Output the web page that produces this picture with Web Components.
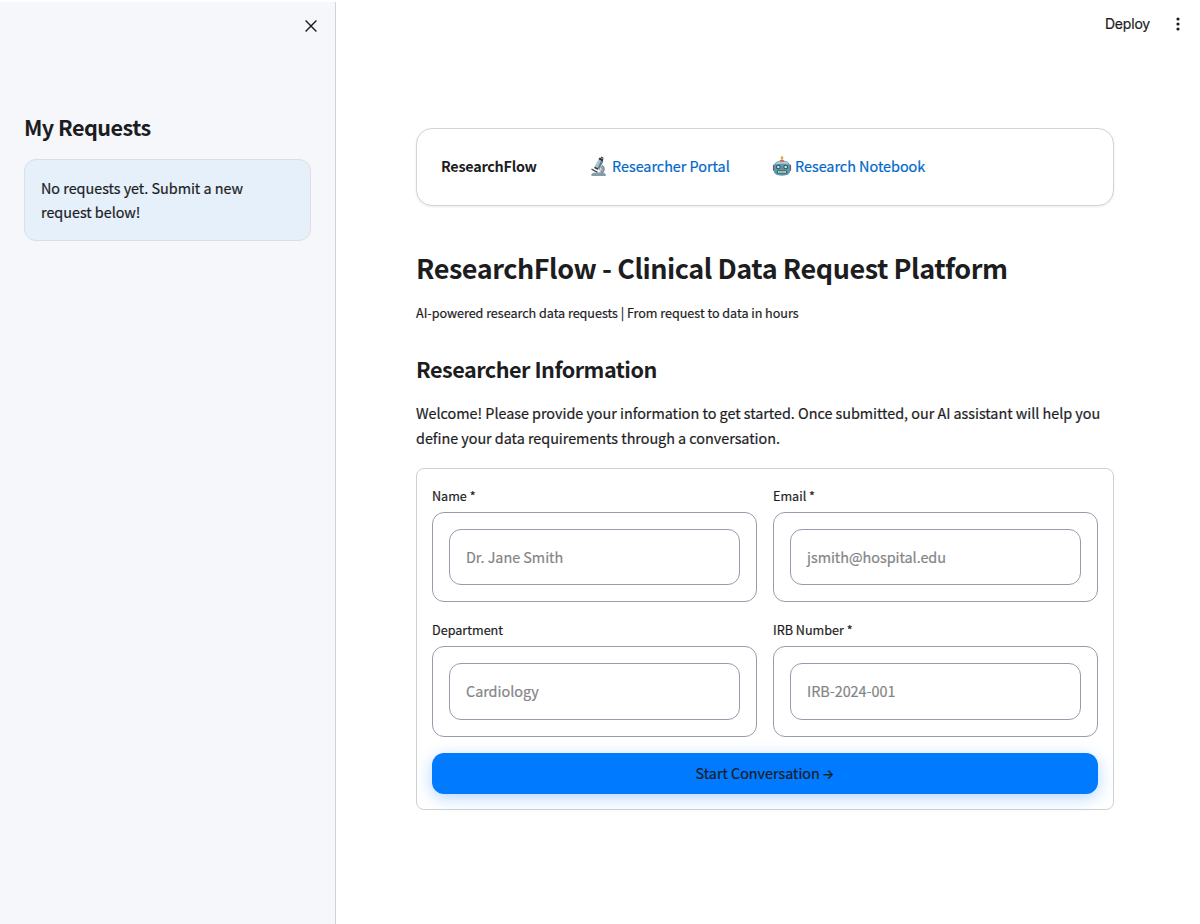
<!DOCTYPE html>
<html lang="en">
<head>
<meta charset="utf-8">
<title>ResearchFlow</title>
<style>
  html, body { margin: 0; height: 100%; background: #fff; }
  body { font-family: "Noto Sans CJK SC", "Noto Sans", sans-serif; font-size: 14.4px; color: #1d1d1f; overflow: hidden; -webkit-text-stroke-width: .2px; }
</style>
</head>
<body>
<rf-app>
  <rf-sidebar slot="sidebar" heading="My Requests">
    <rf-notice><rf-text size="14.4" line="24" track="-.03">No requests yet. Submit a new<br>request below!</rf-text></rf-notice>
  </rf-sidebar>
  <rf-toolbar slot="toolbar">Deploy</rf-toolbar>
  <rf-nav>
    <rf-text slot="brand" size="14.4" line="24" track="-.27" bold>ResearchFlow</rf-text>
    <rf-link icon="microscope">Researcher Portal</rf-link>
    <rf-link icon="robot">Research Notebook</rf-link>
  </rf-nav>
  <rf-text class="title" size="27" line="38" track="-.45" bold style="margin-top:43px">ResearchFlow - Clinical Data Request Platform</rf-text>
  <rf-text class="caption" size="12.6" line="22" track="-.03" style="margin-top:15px">AI-powered research data requests | From request to data in hours</rf-text>
  <rf-text class="section" size="21.6" line="30" track="-.5" bold style="margin-top:30px">Researcher Information</rf-text>
  <rf-text class="intro" size="14.4" line="25" track="-.03" style="margin-top:16px">Welcome! Please provide your information to get started. Once submitted, our AI assistant will help you<br>define your data requirements through a conversation.</rf-text>
  <rf-form>
    <rf-field label="Name *" placeholder="Dr. Jane Smith"></rf-field>
    <rf-field label="Email *" placeholder="jsmith@hospital.edu"></rf-field>
    <rf-field label="Department" placeholder="Cardiology" style="--inner:57px"></rf-field>
    <rf-field label="IRB Number *" placeholder="IRB-2024-001" style="--inner:57px"></rf-field>
    <rf-button slot="action">Start Conversation <span style="font:500 13px Inter,sans-serif;margin-left:-1px">→</span></rf-button>
  </rf-form>
</rf-app>
<script>
class Base extends HTMLElement {
  constructor() { super(); this.attachShadow({ mode: 'open' }); }
  connectedCallback() { this.shadowRoot.innerHTML = this.render(); }
  attr(n) { return this.getAttribute(n) || ''; }
}
const define = (name, render) => customElements.define(name, class extends Base { render() { return render(this); } });

const ICONS = {
  microscope: `<svg width="20" height="20" viewBox="0 0 20 20">
    <path d="M2.5 17.3 4 15.8h11.2l1.5 1.5v1H2.5z" fill="#8ba5b3"/><path d="M2.5 17.8h14.2v.8H2.5z" fill="#4f6c7d"/>
    <path d="M11.5 8.2c4.6 1.4 4.3 6.2 1 7.8H7.6c4-.7 5.6-3 3.9-5.5z" fill="#9db2bd"/>
    <path d="M13 8.6c3.4 2 2.7 6-.6 7.5" fill="none" stroke="#68808e" stroke-width="1.2"/>
    <path d="m9.6 2.2 4.6 2.5-3.9 7.1-4.6-2.5z" fill="#a8c4d3"/><path d="m12.2 3.6 2 1.1-3.9 7.1-1.7-.9z" fill="#647b8b"/>
    <path d="m10.6.5 3.9 2.1-.9 1.8-4.1-2.2z" fill="#2c3033"/><path d="m12.2-.6 2.5 1.3-.7 1.3-2.5-1.4z" fill="#45494c"/>
    <path d="m5.8 9.4 3.8 2.1-.8 1.6-3.7-2z" fill="#35393c"/><path d="m2.8 11.6 5.9 3.2-.5 1.1-5.9-3.1z" fill="#42484b"/>
    <circle cx="11.7" cy="12.1" r="1.4" fill="#e1eaf0" stroke="#72818a" stroke-width=".6"/>
  </svg>`,
  robot: `<svg width="20" height="20" viewBox="0 0 20 20">
    <path d="M10 1v4" stroke="#778b94" stroke-width="1"/><circle cx="10" cy=".7" r="1.4" fill="#f0a332"/>
    <rect x=".9" y="7.6" width="3" height="6.6" rx="1.4" fill="#6b5864"/><rect x="16.1" y="7.6" width="3" height="6.6" rx="1.4" fill="#6b5864"/>
    <path d="M2 9.4C2 5.6 5.2 3.4 10 3.4s8 2.2 8 6v4.9c0 2.8-2.7 4.4-8 4.4s-8-1.6-8-4.4z" fill="#5b98a8"/>
    <path d="M3 7.5C4.2 5.1 7 4 10 4s5.8 1.1 7 3.5c-4.2-1-9.8-1-14 0z" fill="#a9cbd2"/>
    <path d="M8.3 3h3.4l.6 1.8H7.7z" fill="#dd615b"/>
    <circle cx="6.3" cy="10" r="2.3" fill="#2d505e"/><circle cx="13.7" cy="10" r="2.3" fill="#2d505e"/>
    <circle cx="6.3" cy="10" r="1.3" fill="#a4f4f4"/><circle cx="13.7" cy="10" r="1.3" fill="#a4f4f4"/>
    <path d="m10 10.6 1.1 1.8H8.9z" fill="#e25b50"/><rect x="5" y="13.4" width="10" height="3.2" rx="1.4" fill="#37545f"/>
    <path d="M6 14.2h8v1.6H6z" fill="#d9eff0"/><path d="M8 14v2m2-2v2m2-2v2" stroke="#4a6b75" stroke-width=".5"/>
  </svg>`
};

define('rf-text', el => `<style>
  :host { display: block; font-size: ${el.attr('size')}px; line-height: ${el.attr('line')}px; font-weight: ${el.hasAttribute('bold') ? 600 : 400}; white-space: nowrap; letter-spacing: ${el.attr('track') || 0}px; ${el.hasAttribute('bold') ? '-webkit-text-stroke-width: 0;' : ''} }
</style><slot></slot>`);

define('rf-app', () => `<style>
  :host { display: grid; grid-template-columns: 336px 1fr; height: 100vh; }
  .page { display: flex; flex-direction: column; }
  main { padding: 80px 86px 0 80px; }
</style><slot name="sidebar"></slot><div class="page"><slot name="toolbar"></slot><main><slot></slot></main></div>`);

define('rf-sidebar', el => `<style>
  :host { display: block; box-sizing: border-box; margin-top: 2px; padding: 0 24px; background: #f5f7fb; border-right: 1px solid #d0d2d8; }
  header { height: 48px; display: flex; justify-content: flex-end; align-items: center; margin-right: -7px; }
  header svg { display: block; }
  h2 { margin: 61px 0 16px; font-size: 21.6px; line-height: 32px; font-weight: 600; letter-spacing: -.55px; white-space: nowrap; -webkit-text-stroke-width: 0; }
</style><header><svg width="14" height="14" viewBox="0 0 14 14" fill="none" stroke="#1d1d1f" stroke-width="1.4"><path d="m1.6 1.6 10.8 10.8M12.4 1.6 1.6 12.4"/></svg></header>
<h2>${el.attr('heading')}</h2><slot></slot>`);

define('rf-notice', () => `<style>
  :host { display: block; box-sizing: border-box; height: 82px; padding: 16px; border: 1px solid #dbdfe3; border-radius: 12px; background: #e6f0fb; }
</style><slot></slot>`);

define('rf-toolbar', () => `<style>
  :host { display: flex; height: 48px; box-sizing: border-box; padding-right: 20px; justify-content: flex-end; align-items: center; gap: 26px; font: 400 14px Inter, sans-serif; letter-spacing: -.2px; }
  svg { display: block; }
  span { padding-bottom: 2px; }
</style><span><slot></slot></span><svg width="4" height="14" viewBox="0 0 4 14" fill="#1d1d1f"><circle cx="2" cy="2" r="1.6"/><circle cx="2" cy="7" r="1.6"/><circle cx="2" cy="12" r="1.6"/></svg>`);

define('rf-nav', () => `<style>
  :host { display: grid; grid-template-columns: 148px 183px 1fr; align-items: center; box-sizing: border-box; height: 78px; padding: 0 24px 2px; border: 1px solid #d1d3dd; border-radius: 16px; box-shadow: 0 1px 3px rgba(0,0,0,.08); background: #fff; }
</style><slot name="brand"></slot><slot></slot>`);

define('rf-link', el => `<style>
  :host { display: flex; align-items: center; gap: 3px; font-size: 14.4px; line-height: 24px; letter-spacing: -.02px; color: #0068c9; white-space: nowrap; }
  svg { display: block; overflow: visible; margin-top: 2px; }
</style>${ICONS[el.attr('icon')]}<span><slot></slot></span>`);

define('rf-form', () => `<style>
  :host { display: block; box-sizing: border-box; height: 342px; margin-top: 18px; padding: 15px; border: 1px solid #cfd0d4; border-radius: 8px; }
  .grid { display: grid; grid-template-columns: 1fr 1fr; gap: 16px; margin-bottom: 16px; }
</style><div class="grid"><slot></slot></div><slot name="action"></slot>`);

define('rf-field', el => `<style>
  :host { display: block; }
  label { display: block; height: 28px; font-size: 12.6px; line-height: 24px; white-space: nowrap; }
  .outer { border: 1px solid #979cac; border-radius: 12px; padding: 16px; }
  .inner { box-sizing: border-box; height: var(--inner, 56px); border: 1px solid #979cac; border-radius: 12px; padding: 0 16px; font-size: 14.4px; line-height: 53px; letter-spacing: -.03px; color: #848487; white-space: nowrap; }
</style><label>${el.attr('label')}</label><div class="outer"><div class="inner">${el.attr('placeholder')}</div></div>`);

define('rf-button', () => `<style>
  :host { display: flex; align-items: center; justify-content: center; box-sizing: border-box; height: 41px; padding-bottom: 2px; border-radius: 12px; background: #007aff; box-shadow: 0 4px 16px rgba(0,122,255,.3); font-size: 14.4px; line-height: 24px; letter-spacing: -.03px; }
</style><span><slot></slot></span>`);
</script>
</body>
</html>
